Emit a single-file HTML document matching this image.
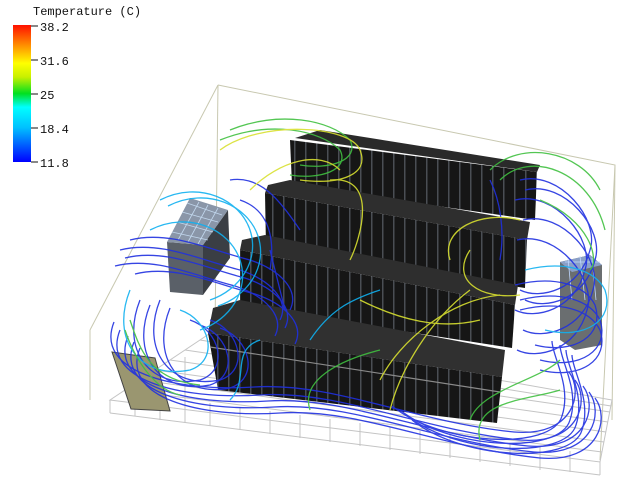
<!DOCTYPE html>
<html><head><meta charset="utf-8"><style>
html,body{margin:0;padding:0;background:#fff;width:625px;height:485px;overflow:hidden}
svg{display:block}
text{font-family:"Liberation Mono","DejaVu Sans Mono",monospace;font-size:12px;fill:#111}
</style></head><body>
<svg width="625" height="485" viewBox="0 0 625 485">
<defs>
<linearGradient id="lg" x1="0" y1="1" x2="0" y2="0">
<stop offset="0" stop-color="#0000ff"/><stop offset="0.25" stop-color="#00c0ff"/>
<stop offset="0.4" stop-color="#00ffff"/><stop offset="0.5" stop-color="#00e020"/>
<stop offset="0.62" stop-color="#c8f000"/><stop offset="0.72" stop-color="#ffff00"/>
<stop offset="0.85" stop-color="#ff9000"/><stop offset="1" stop-color="#ff1000"/>
</linearGradient>
<pattern id="slots" width="11" height="10" patternUnits="userSpaceOnUse">
<rect width="11" height="10" fill="#161616"/><rect x="8" width="1.5" height="10" fill="#4a4e54"/>
</pattern>
<path id="b1" d="M120,330 C100,380 180,400 260,395 C340,390 420,430 520,440 C580,445 590,400 575,380"/>
<path id="b2" d="M400,410 C450,450 560,455 570,420 C580,390 560,360 560,345"/>
<path id="b3" d="M520,180 C560,170 600,220 590,250 C580,290 540,300 520,290"/>
<path id="b4" d="M120,250 C160,240 200,260 240,270 C270,280 290,300 280,320"/>
<path id="b5" d="M140,300 C120,350 150,390 200,380 C230,370 220,330 190,320"/>
<path id="b6" d="M520,300 C560,290 590,300 600,320 C610,350 580,370 540,360"/>
<path id="b7" d="M230,130 C280,110 330,120 350,140 C360,160 330,170 300,165"/>
<path id="b8" d="M160,200 C200,180 240,200 250,230 C260,260 240,290 210,300"/>
</defs>
<!-- legend -->
<text x="33" y="15">Temperature (C)</text>
<rect x="13" y="25" width="18" height="137" fill="url(#lg)"/>
<g stroke="#111" stroke-width="1">
<line x1="31" y1="26" x2="38" y2="26"/><line x1="31" y1="60" x2="38" y2="60"/><line x1="31" y1="94" x2="38" y2="94"/><line x1="31" y1="128" x2="38" y2="128"/><line x1="31" y1="162" x2="38" y2="162"/></g>
<text x="40" y="31">38.2</text><text x="40" y="65">31.6</text><text x="40" y="99">25</text><text x="40" y="133">18.4</text><text x="40" y="167">11.8</text>
<!-- room box -->
<g stroke="#c8c8b0" stroke-width="1" fill="none">
<polyline points="218,85 615,165 600,460"/>
<line x1="218" y1="85" x2="90" y2="330"/>
<line x1="218" y1="85" x2="215" y2="330"/>
<line x1="90" y1="330" x2="90" y2="400"/>
<line x1="615" y1="165" x2="612" y2="420"/>
</g>
<!-- floor grid -->
<g stroke="#c4c4c4" stroke-width="1" fill="none">
<polygon points="110,400 215,330 612,400 600,462"/>
<line x1="110" y1="400" x2="110" y2="413"/><line x1="110" y1="413" x2="600" y2="475"/><line x1="600" y1="462" x2="600" y2="475"/>
<path d="M135,384 L135,416 M160,370 L160,420 M185,357 L185,423 M210,403 L210,426 M240,407 L240,430 M270,411 L270,434 M300,415 L300,438 M330,419 L330,442 M360,423 L360,446 M390,427 L390,450 M420,431 L420,454 M450,435 L450,458 M480,439 L480,462 M510,443 L510,466 M540,447 L540,470 M570,451 L570,472"/>
<path d="M125,390 L602,452 M140,380 L604,442 M155,370 L606,432 M170,360 L608,422 M185,350 L610,412 M200,340 L611,406"/>
</g>
<!-- CRAC left -->
<polygon points="167,242 203,245 203,295 170,292" fill="#5a6068"/>
<polygon points="203,245 228,210 230,258 203,295" fill="#3a3e44"/>
<polygon points="167,242 190,198 228,210 203,245" fill="#8a96a8"/>
<g stroke="#d0e8ff" stroke-width="0.8" opacity="0.8"><path d="M172,232 L208,240 M177,222 L213,232 M182,212 L218,222 M187,203 L222,215 M178,240 L199,202 M188,242 L208,205 M198,244 L218,208"/></g>
<!-- CRAC right -->
<polygon points="560,262 590,255 602,265 602,345 575,350 560,340" fill="#6a6e70"/>
<polygon points="560,262 590,255 602,265 572,272" fill="#8aa0c8"/>
<g stroke="#c0d8ff" stroke-width="0.8"><path d="M565,262 L600,262 M568,258 L572,300 M580,256 L585,300 M592,258 L596,300"/></g>
<!-- door -->
<polygon points="112,352 155,358 170,411 131,409" fill="#9a9670" stroke="#444" stroke-width="1"/>
<!-- racks: back to front -->
<g>
<polygon points="295,138 320,130 540,165 537,172" fill="#2a2a2a"/>
<polygon points="290,140 537,172 535,220 292,185" fill="url(#slots)"/>
<polygon points="268,185 290,180 530,222 527,240 265,193" fill="#2e2e2e"/>
<polygon points="265,193 527,240 525,288 266,248" fill="url(#slots)"/>
<polygon points="242,240 265,235 518,285 515,305 240,250" fill="#2e2e2e"/>
<polygon points="240,250 515,305 512,348 240,306" fill="url(#slots)"/>
<polygon points="213,308 240,300 505,350 502,377 208,333" fill="#303030"/>
<polygon points="208,333 502,377 497,423 218,390" fill="url(#slots)"/>
<line x1="210" y1="347" x2="500" y2="392" stroke="#8a8a8a" stroke-width="1.2"/>
</g>
<!-- streamlines -->
<g fill="none" stroke-width="1.3" opacity="0.9">
<g stroke="#2030e0">
<use href="#b1"/><use href="#b1" transform="translate(8,6)"/><use href="#b1" transform="translate(14,12)"/><use href="#b1" transform="translate(-6,-8)"/><use href="#b1" transform="translate(20,18)"/>
<use href="#b2"/><use href="#b2" transform="translate(6,5)"/><use href="#b2" transform="translate(-8,-4)"/><use href="#b2" transform="translate(12,10)"/>
<use href="#b3"/><use href="#b3" transform="translate(5,10)"/><use href="#b3" transform="translate(-5,20)"/><use href="#b3" transform="translate(3,40)"/><use href="#b3" transform="translate(-3,60)"/>
<use href="#b4"/><use href="#b4" transform="translate(5,8)"/><use href="#b4" transform="translate(-5,16)"/><use href="#b4" transform="translate(10,-10)"/><use href="#b4" transform="translate(15,24)"/>
<use href="#b5"/><use href="#b5" transform="translate(10,5)"/><use href="#b5" transform="translate(20,0)"/><use href="#b5" transform="translate(30,8)"/>
<use href="#b6"/><use href="#b6" transform="translate(0,10)"/><use href="#b6" transform="translate(-5,-15)"/>
<path d="M230,180 C260,175 280,200 300,230"/><path d="M240,200 C270,210 275,240 270,270"/>
<path d="M490,180 C500,200 505,230 500,260"/><path d="M270,250 C275,270 280,290 285,310"/>
</g>
<g stroke="#10b0f0">
<use href="#b8"/><use href="#b8" transform="translate(8,6)"/><use href="#b8" transform="translate(-10,30)"/>
<use href="#b5" transform="translate(-10,-10)"/><use href="#b6" transform="translate(5,-30)"/>
<path d="M310,340 C330,310 350,300 380,290"/><path d="M230,400 C250,380 230,350 260,340"/>
</g>
<g stroke="#40c040">
<use href="#b7"/><use href="#b7" transform="translate(-10,10)"/>
<path d="M490,170 C520,140 580,150 600,190"/><path d="M500,180 C530,150 590,170 605,230"/>
<path d="M130,320 C140,350 150,380 200,385"/><path d="M125,330 C135,360 155,390 180,395"/>
<path d="M470,420 C480,390 540,380 560,360"/><path d="M480,440 C470,400 530,400 560,390"/>
<path d="M310,410 C300,380 340,360 380,350"/>
<path d="M540,200 C590,220 600,260 590,270"/>
</g>
<g stroke="#d8e030">
<path d="M220,150 C260,120 350,125 360,150 C370,175 340,185 300,180"/>
<path d="M330,180 C380,175 360,240 350,260"/>
<path d="M450,260 C440,230 480,210 520,220"/>
<path d="M380,380 C400,340 450,300 500,295"/>
<path d="M360,300 C400,320 440,330 480,320"/>
<path d="M390,410 C400,370 430,320 470,290"/>
<path d="M250,190 C280,160 320,150 340,170"/>
<path d="M470,250 C450,280 480,300 520,295"/>
</g>
</g>
</svg>
</body></html>
